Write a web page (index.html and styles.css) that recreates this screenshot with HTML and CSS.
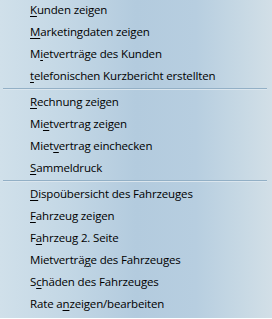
FILE: index.html
```html
<!DOCTYPE html>
<html lang="de">
<head>
<meta charset="utf-8">
<link rel="stylesheet" href="styles.css">
</head>
<body>
<div class="menu">
  <ul class="group">
    <li class="item"><u>K</u>unden zeigen</li>
    <li class="item"><u>M</u>arketingdaten zeigen</li>
    <li class="item">M<u>i</u>etverträge des Kunden</li>
    <li class="item"><u>t</u>elefonischen Kurzbericht erstellten</li>
  </ul>
  <div class="sep"></div>
  <ul class="group">
    <li class="item"><u>R</u>echnung zeigen</li>
    <li class="item">Mi<u>e</u>tvertrag zeigen</li>
    <li class="item">Miet<u>v</u>ertrag einchecken</li>
    <li class="item"><u>S</u>ammeldruck</li>
  </ul>
  <div class="sep"></div>
  <ul class="group">
    <li class="item"><u>D</u>ispoübersicht des Fahrzeuges</li>
    <li class="item"><u>F</u>ahrzeug zeigen</li>
    <li class="item">F<u>a</u>hrzeug 2. Seite</li>
    <li class="item">Mietverträ<u>g</u>e des Fahrzeuges</li>
    <li class="item">S<u>c</u>häden des Fahrzeuges</li>
    <li class="item">Rate a<u>n</u>zeigen/bearbeiten</li>
  </ul>
</div>
</body>
</html>
```

FILE: styles.css
```css
html, body {
  margin: 0;
  padding: 0;
}
body {
  width: 272px;
  height: 319px;
  overflow: hidden;
}
.menu {
  width: 272px;
  height: 319px;
  box-sizing: border-box;
  background: linear-gradient(to right, #d0e0ea 0%, #c3d7e5 25%, #b3cbde 50%, #b7cee0 72%, #c6d8e4 88%, #d2dfe7 100%);
  font-family: "Open Sans", "Noto Sans", sans-serif;
  font-size: 11.5px;
  letter-spacing: -0.15px;
  color: #000;
  margin-top: -1px;
}
.group {
  list-style: none;
  margin: 0;
  padding: 0;
}
.item {
  height: 22px;
  line-height: 22px;
  padding-left: 30px;
  white-space: nowrap;
}
.item u {
  text-decoration: underline;
  text-decoration-thickness: 1px;
  text-underline-offset: 2px;
}
.sep {
  height: 4px;
  display: flex;
  align-items: flex-start;
  padding: 1px 5px 0 3px;
  box-sizing: border-box;
}
.sep::before {
  content: "";
  flex: 1;
  height: 1px;
  background: #93b0c6;
  box-shadow: 0 1px 0 #dbe6ee;
}
```
